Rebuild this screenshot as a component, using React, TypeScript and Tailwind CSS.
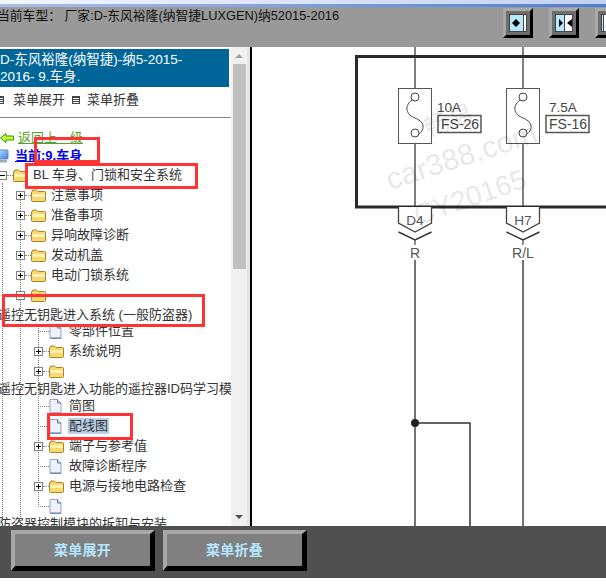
const FONT = "font-['Liberation_Sans','Noto_Sans_CJK_SC',sans-serif]"

function Folder() {
  return (
    <svg width="15" height="13" viewBox="0 0 15 13" className="shrink-0">
      <path d="M1 3 L1.8 1 H5.5 L7 2.5 H13.5 Q14.5 2.5 14.5 3.5 V11.5 Q14.5 12.5 13.5 12.5 H1.5 Q0.5 12.5 0.5 11.5 V3 Z" fill="#f7d96e" stroke="#a8842c" strokeWidth="1" />
      <path d="M1.5 5 H13.5 V8 H1.5 Z" fill="#fff3b8" />
    </svg>
  )
}

function Doc() {
  return (
    <svg width="13" height="15" viewBox="0 0 13 15" className="shrink-0">
      <path d="M1 0.5 H8.5 L12 4 V14.5 H1 Z" fill="#eef3fb" stroke="#8fa3c8" strokeWidth="1" />
      <path d="M8.5 0.5 V4 H12" fill="#cfdcf0" stroke="#5d75a6" strokeWidth="1" />
      <path d="M1.5 14 H12" stroke="#5d75a6" strokeWidth="1" />
    </svg>
  )
}

function Expander({ minus }: { minus?: boolean }) {
  return (
    <div className="relative w-[9px] h-[9px] border border-[#808080] bg-white shrink-0">
      <div className="absolute left-[1px] top-[3px] w-[5px] h-px bg-black" />
      {!minus && <div className="absolute left-[3px] top-[1px] w-px h-[5px] bg-black" />}
    </div>
  )
}

function Row({ indent, kind, label, selected }: { indent: string; kind: 'plus' | 'minus' | 'doc'; label?: string; selected?: boolean }) {
  return (
    <div className={`flex items-center h-5 whitespace-nowrap ${indent}`}>
      {kind === 'doc' ? (
        <div className="w-[11px] h-px border-t border-dotted border-[#808080] shrink-0" />
      ) : (
        <>
          <Expander minus={kind === 'minus'} />
          <div className="w-[6px] h-px border-t border-dotted border-[#808080] shrink-0" />
        </>
      )}
      {kind === 'doc' ? <Doc /> : <Folder />}
      {label && (
        <span className={`text-[13px] leading-4 text-[#333] px-px ${kind === 'doc' ? 'ml-[6px]' : 'ml-[4px]'} ${selected ? 'bg-[#b9cfe8]' : ''}`}>{label}</span>
      )}
    </div>
  )
}

function LongText({ text, first }: { text: string; first?: boolean }) {
  return (
    <div className={`relative text-[13px] leading-[15px] text-[#333] whitespace-nowrap -ml-[2px] ${first ? 'h-4 pt-[2px]' : 'h-[15px]'}`}>
      {text}
    </div>
  )
}

function SplitButton({ kind }: { kind: 'left' | 'both' | 'right' }) {
  const width = kind === 'left' ? 'w-[14px]' : kind === 'both' ? 'w-[9px]' : 'w-[2px]'
  return (
    <div className="w-[30px] h-[30px] border-[3px] border-t-[#a9a9a9] border-l-[#a9a9a9] border-r-black border-b-black bg-[#6e6e6e] p-[3px] shrink-0">
      <div className="flex h-full border border-[#444] bg-white">
        <div className={`${width} bg-[#b5e8ff] border-r border-[#444] flex items-center justify-end`}>
          {kind === 'left' && <div className="border-y-[4px] border-y-transparent border-r-[4px] border-r-black" />}
          {kind !== 'right' && <div className={`border-y-[4px] border-y-transparent border-l-[4px] border-l-black ${kind === 'left' ? 'mr-[3px]' : 'mr-px'}`} />}
        </div>
        <div className="flex-1 flex items-center">
          {kind !== 'left' && <div className="border-y-[4px] border-y-transparent border-r-[5px] border-r-black ml-[2px]" />}
        </div>
      </div>
    </div>
  )
}

function BottomButton({ label }: { label: string }) {
  return (
    <button className="w-[144px] h-[41px] border-t-[4px] border-l-[4px] border-r-[5px] border-b-[5px] border-t-[#a8a8a8] border-l-[#a8a8a8] border-r-black border-b-black bg-[#808080] text-[14px] font-bold text-[#b5e6ff] tracking-[0.25px]">
      {label}
    </button>
  )
}

function Fuse({ x, amp, name, ampX, boxX, boxW }: { x: number; amp: string; name: string; ampX: number; boxX: number; boxW: number }) {
  return (
    <g>
      <rect x={x - 16.5} y="41.5" width="33" height="55" fill="white" stroke="#555" strokeWidth="1" />
      <path d={`M${x - 3} 53 C${x - 12} 60 ${x - 8} 68 ${x} 71 C${x + 8} 74 ${x + 12} 81 ${x + 3} 88`} fill="none" stroke="#444" strokeWidth="1" />
      <circle cx={x} cy="50" r="4" fill="white" stroke="#444" />
      <circle cx={x} cy="86" r="4" fill="white" stroke="#444" />
      <text x={ampX} y="65" fontSize="13.5" fill="#444" fontFamily="Liberation Sans">{amp}</text>
      <rect x={boxX} y="68.5" width={boxW} height="17" fill="none" stroke="#555" strokeWidth="1.5" />
      <text x={boxX + 3} y="82" fontSize="14" fill="#444" fontFamily="Liberation Sans">{name}</text>
    </g>
  )
}

function Connector({ x, label, wire }: { x: number; label: string; wire: string }) {
  return (
    <g>
      <path d={`M${x - 16.5} 160 V176 L${x} 185 L${x + 16.5} 176 V160`} fill="white" stroke="#444" strokeWidth="1.3" />
      <text x={x} y="178" fontSize="13.5" fill="#555" textAnchor="middle" fontFamily="Liberation Sans">{label}</text>
      <path d={`M${x - 16.5} 185 L${x} 193 L${x + 16.5} 185`} fill="none" stroke="#333" strokeWidth="1.4" />
      <path d={`M${x} 193 V198`} stroke="#444" strokeWidth="1.2" />
      <text x={x} y="211" fontSize="14" fill="#555" textAnchor="middle" fontFamily="Liberation Sans">{wire}</text>
    </g>
  )
}

function Diagram() {
  return (
    <svg width="354" height="479" viewBox="0 0 354 479" className="block">
      {/* origin is x=252, y=47 on the page */}
      <path d="M163 0 V41 M163 96 V160 M271 0 V41 M271 96 V160" stroke="#555" strokeWidth="1.5" />
      <path d="M163 213 V479 M271 213 V479" stroke="#444" strokeWidth="1.5" />
      <path d="M163 376 H218 V479" fill="none" stroke="#333" strokeWidth="1.5" />
      <circle cx="163" cy="376" r="4" fill="#222" />
      <path d="M354 9.5 H104.5 V160 H354" fill="none" stroke="#2a2a2a" strokeWidth="3" />
      <Fuse x={163} amp="10A" name="FS-26" ampX={185} boxX={186} boxW={43} />
      <Fuse x={271} amp="7.5A" name="FS-16" ampX={297} boxX={294} boxW={43} />
      <Connector x={163} label="D4" wire="R" />
      <Connector x={271} label="H7" wire="R/L" />
      {/* 워터마크 */}
      <g fill="#000" fillOpacity="0.11" fontFamily="Liberation Sans">
        <text x="138" y="143" fontSize="30" transform="rotate(-18 138 143)">car388.com</text>
        <text x="166" y="178" fontSize="28" transform="rotate(-19 166 178)">CY20165</text>
        <text x="176" y="90" fontSize="25" fontFamily="Noto Sans CJK SC" transform="rotate(-19 176 90)">畅易</text>
      </g>
    </svg>
  )
}

export default function App() {
  const lines = 'w-[8px] h-[8px] border border-[#444] bg-[repeating-linear-gradient(#444_0,#444_1px,white_1px,white_2px)] shrink-0'
  return (
    <div className={`relative w-[606px] h-[587px] overflow-hidden bg-white ${FONT}`}>
      <div className="h-[4px] bg-gradient-to-r from-[#f4f6fc] to-[#c4d0f0]" />
      <div className="h-[3px] bg-gradient-to-r from-[#a9bfe8] to-[#4f7fd0]" />

      {/* 상단 바 */}
      <div className="relative h-10 bg-[#999999] overflow-hidden">
        <div className="absolute left-[-3px] top-px text-[12.8px] leading-[16px] text-[#111] whitespace-nowrap">当前车型：&nbsp;厂家:D-东风裕隆(纳智捷LUXGEN)纳52015-2016</div>
        <div className="flex gap-4 pl-[503px] pt-px">
          <SplitButton kind="left" />
          <SplitButton kind="both" />
          <SplitButton kind="right" />
        </div>
      </div>

      {/* 본문 */}
      <div className="flex h-[479px]">
        <div className="relative w-[247px] shrink-0 overflow-hidden flex">
          <div className="w-[231px] shrink-0 overflow-hidden">
            <div className="mt-[2px] h-[38px] w-[229px] bg-[#006699] text-[13.5px] leading-[17px] text-white pt-[2px] whitespace-nowrap">
              <div>D-东风裕隆(纳智捷)-纳5-2015-</div>
              <div>2016- 9.车身.</div>
            </div>
            <div className="flex items-center h-[31px] pb-[4px] border-b border-[#888] text-[13px] text-[#333] -ml-[4px] whitespace-nowrap">
              <span className={lines} />
              <span className="ml-[9px] mr-[7px]">菜单展开</span>
              <span className={lines} />
              <span className="ml-[7px]">菜单折叠</span>
            </div>
            <div className="flex items-center h-[18px] mt-[11px] whitespace-nowrap">
              <svg width="14" height="10" viewBox="0 0 14 10" className="shrink-0">
                <path d="M0.5 5 L6 0.5 V3 H13.5 V7 H6 V9.5 Z" fill="#ccff33" stroke="#2f9a00" strokeWidth="1" />
              </svg>
              <span className="ml-[4px] text-[13px] text-[#5aa02c] underline">返回上一级</span>
            </div>
            <div className="flex items-center h-[18px] whitespace-nowrap">
              <svg width="10" height="14" viewBox="0 0 10 14" className="shrink-0">
                <defs>
                  <linearGradient id="screen" x1="0" y1="0" x2="1" y2="1">
                    <stop offset="0" stopColor="#d5e9ff" />
                    <stop offset="1" stopColor="#2f7de0" />
                  </linearGradient>
                </defs>
                <rect x="-4" y="1" width="12" height="9" rx="1" fill="url(#screen)" stroke="#6688bb" />
                <rect x="-2" y="11" width="9" height="2.5" fill="#a0a8b4" />
              </svg>
              <span className="ml-[5px] text-[13px] font-bold text-[#0000ee] underline">当前:9.车身</span>
            </div>

            {/* 트리 */}
            <div className="relative">
              <div className="absolute left-[2px] top-[18px] bottom-0 border-l border-dotted border-[#808080]" />
              <div className="absolute left-[20px] top-[35px] bottom-0 border-l border-dotted border-[#808080]" />
              <div className="absolute left-[38px] top-[160px] h-[180px] border-l border-dotted border-[#808080]" />
              <Row indent="-ml-[2px]" kind="minus" label="BL 车身、门锁和安全系统" />
              <Row indent="pl-4" kind="plus" label="注意事项" />
              <Row indent="pl-4" kind="plus" label="准备事项" />
              <Row indent="pl-4" kind="plus" label="异响故障诊断" />
              <Row indent="pl-4" kind="plus" label="发动机盖" />
              <Row indent="pl-4" kind="plus" label="电动门锁系统" />
              <Row indent="pl-4" kind="minus" />
              <LongText first text="遥控无钥匙进入系统 (一般防盗器)" />
              <Row indent="pl-[38px]" kind="doc" label="零部件位置" />
              <Row indent="pl-[34px]" kind="plus" label="系统说明" />
              <Row indent="pl-[34px]" kind="plus" />
              <LongText text="遥控无钥匙进入功能的遥控器ID码学习模式" />
              <Row indent="pl-[38px]" kind="doc" label="简图" />
              <Row indent="pl-[38px]" kind="doc" label="配线图" selected />
              <Row indent="pl-[34px]" kind="plus" label="端子与参考值" />
              <Row indent="pl-[38px]" kind="doc" label="故障诊断程序" />
              <Row indent="pl-[34px]" kind="plus" label="电源与接地电路检查" />
              <Row indent="pl-[38px]" kind="doc" />
              <LongText text="防盗器控制模块的拆卸与安装" />
            </div>
          </div>

          {/* 스크롤바 */}
          <div className="w-4 bg-[#f0f0f0] flex flex-col items-center shrink-0">
            <div className="h-[17px] flex items-center justify-center">
              <div className="border-x-[4px] border-x-transparent border-b-[4px] border-b-[#a0a0a0]" />
            </div>
            <div className="w-[13px] h-[205px] bg-[#c0c0c0]" />
            <div className="mt-auto h-[17px] flex items-center justify-center mb-[1px]">
              <div className="border-x-[4px] border-x-transparent border-t-[4px] border-t-[#505050]" />
            </div>
          </div>
        </div>
        <div className="w-[3px] bg-[#e4e4e4] shrink-0" />
        <div className="w-[2px] bg-black shrink-0" />
        <Diagram />
      </div>

      {/* 하단 버튼 */}
      <div className="flex gap-2 h-[52px] bg-[#505050] pl-[11px] pt-1">
        <BottomButton label="菜单展开" />
        <BottomButton label="菜单折叠" />
      </div>

      {/* 빨간 표시 */}
      <div className="absolute left-[34px] top-[137px] w-[66px] h-[26px] border-[3px] border-[#ff3333]" />
      <div className="absolute left-[25px] top-[163px] w-[173px] h-[26px] border-[3px] border-[#ff3333]" />
      <div className="absolute left-[2px] top-[294px] w-[203px] h-[33px] border-[3px] border-[#ff3333]" />
      <div className="absolute left-[47px] top-[413px] w-[86px] h-[27px] border-[3px] border-[#ff3333]" />
    </div>
  )
}
